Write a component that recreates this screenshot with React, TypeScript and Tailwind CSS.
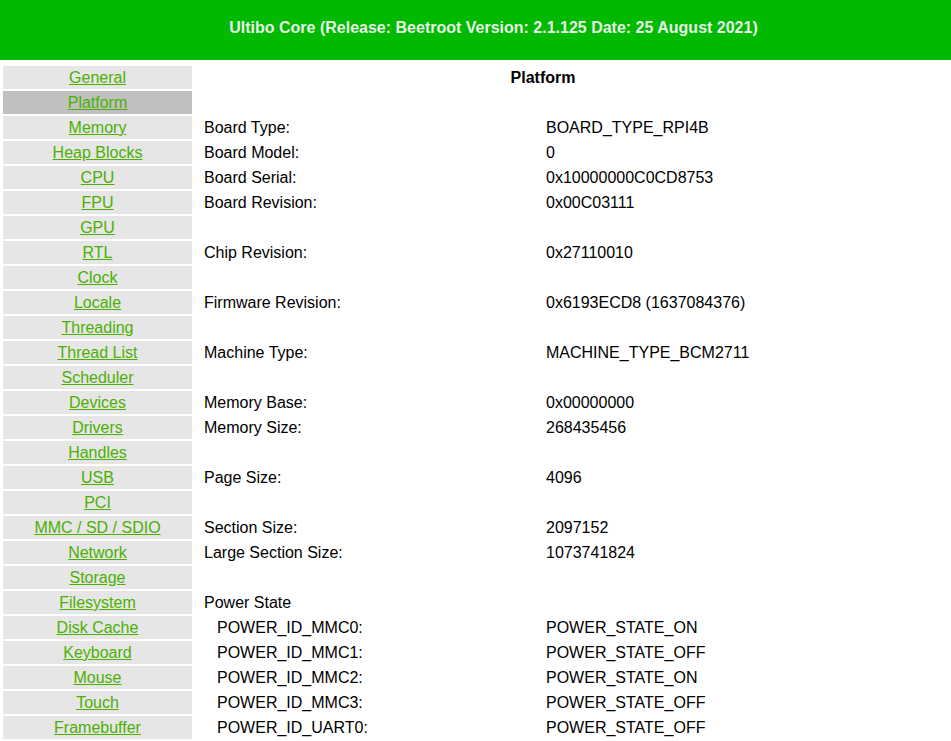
import React from "react";

const menu = [
  "General","Platform","Memory","Heap Blocks","CPU","FPU","GPU","RTL","Clock","Locale","Threading","Thread List","Scheduler","Devices","Drivers","Handles","USB","PCI","MMC / SD / SDIO","Network","Storage","Filesystem","Disk Cache","Keyboard","Mouse","Touch","Framebuffer",
];

type Row = { kind: "head" } | { kind: "blank" } | { kind: "kv"; k: string; v: string; indent?: boolean } | { kind: "label"; k: string };

const rows: Row[] = [
  { kind: "head" },
  { kind: "blank" },
  { kind: "kv", k: "Board Type:", v: "BOARD_TYPE_RPI4B" },
  { kind: "kv", k: "Board Model:", v: "0" },
  { kind: "kv", k: "Board Serial:", v: "0x10000000C0CD8753" },
  { kind: "kv", k: "Board Revision:", v: "0x00C03111" },
  { kind: "blank" },
  { kind: "kv", k: "Chip Revision:", v: "0x27110010" },
  { kind: "blank" },
  { kind: "kv", k: "Firmware Revision:", v: "0x6193ECD8 (1637084376)" },
  { kind: "blank" },
  { kind: "kv", k: "Machine Type:", v: "MACHINE_TYPE_BCM2711" },
  { kind: "blank" },
  { kind: "kv", k: "Memory Base:", v: "0x00000000" },
  { kind: "kv", k: "Memory Size:", v: "268435456" },
  { kind: "blank" },
  { kind: "kv", k: "Page Size:", v: "4096" },
  { kind: "blank" },
  { kind: "kv", k: "Section Size:", v: "2097152" },
  { kind: "kv", k: "Large Section Size:", v: "1073741824" },
  { kind: "blank" },
  { kind: "label", k: "Power State" },
  { kind: "kv", k: "POWER_ID_MMC0:", v: "POWER_STATE_ON", indent: true },
  { kind: "kv", k: "POWER_ID_MMC1:", v: "POWER_STATE_OFF", indent: true },
  { kind: "kv", k: "POWER_ID_MMC2:", v: "POWER_STATE_ON", indent: true },
  { kind: "kv", k: "POWER_ID_MMC3:", v: "POWER_STATE_OFF", indent: true },
  { kind: "kv", k: "POWER_ID_UART0:", v: "POWER_STATE_OFF", indent: true },
];

function RightCell({ r }: { r: Row }) {
  if (r.kind === "head") {
    return <div className="flex-1 text-center font-bold pr-[57px]">Platform</div>;
  }
  if (r.kind === "blank") return <div className="flex-1" />;
  if (r.kind === "label") return <div className="flex-1 pl-[12px]">{r.k}</div>;
  return (
    <div className="flex flex-1">
      <div className={`w-[354px] ${r.indent ? "pl-[25px]" : "pl-[12px]"}`}>{r.k}</div>
      <div>{r.v}</div>
    </div>
  );
}

export default function App() {
  return (
    <div className="w-[951px] h-[741px] overflow-hidden bg-white text-black text-[16px] leading-[23px]" style={{ fontFamily: '"Liberation Sans", Arial, sans-serif' }}>
      <div className="h-[60px] bg-[#00b900] flex items-center justify-center pl-[36px] pb-[6px] font-bold text-[#e6f2e6]">
        Ultibo Core (Release: Beetroot Version: 2.1.125 Date: 25 August 2021)
      </div>
      <div className="flex flex-col gap-[2px] pt-[6px] pl-[3px]">
        {menu.map((m, i) => (
          <div key={m} className="flex h-[23px] items-center">
            <div className={`w-[189px] h-[23px] text-center ${i === 1 ? "bg-[#c0c0c0]" : "bg-[#e6e6e6]"}`}>
              <a href="#" className="text-[#4cb000] underline">{m}</a>
            </div>
            <RightCell r={rows[i]} />
          </div>
        ))}
      </div>
    </div>
  );
}
